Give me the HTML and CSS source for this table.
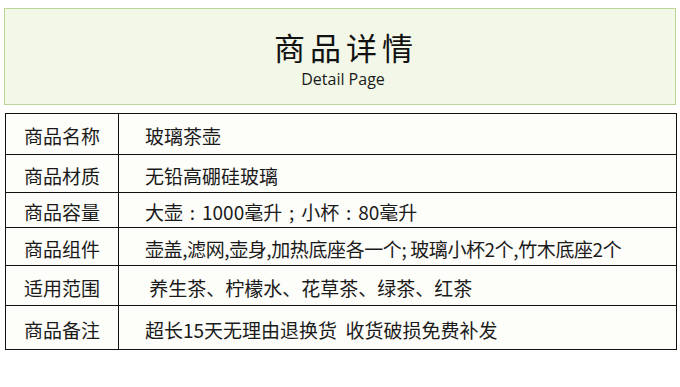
FILE: index.html
```html
<!DOCTYPE html>
<html lang="zh">
<head>
<meta charset="utf-8">
<link rel="stylesheet" href="styles.css">
</head>
<body>
<div class="page">
  <header class="banner">
    <h1 class="title">商品详情</h1>
    <p class="subtitle">Detail Page</p>
  </header>
  <table class="spec">
    <tr class="r1"><th>商品名称</th><td>玻璃茶壶</td></tr>
    <tr class="r2"><th>商品材质</th><td>无铅高硼硅玻璃</td></tr>
    <tr class="r3"><th>商品容量</th><td>大壶<span class="punct">:</span>1000毫升<span class="punct">;</span>小杯<span class="punct">:</span>80毫升</td></tr>
    <tr class="r4"><th>商品组件</th><td class="tight">壶盖,滤网,壶身,加热底座各一个; 玻璃小杯2个,竹木底座2个</td></tr>
    <tr class="r5"><th>适用范围</th><td>&nbsp;养生茶、柠檬水、花草茶、绿茶、红茶</td></tr>
    <tr class="r6"><th>商品备注</th><td>超长15天无理由退换货&nbsp;&nbsp;收货破损免费补发</td></tr>
  </table>
</div>
</body>
</html>
```
FILE: styles.css
```css
html, body {
  margin: 0;
  padding: 0;
  background: #ffffff;
}
.page {
  width: 680px;
  height: 387px;
  padding-top: 8px;
  box-sizing: border-box;
  font-family: "Noto Sans CJK SC", "Noto Sans", sans-serif;
  color: #1e1e1e;
}
.banner {
  margin: 0 4px;
  height: 97px;
  box-sizing: border-box;
  border: 1px solid #bcd598;
  background: #f2f7e7;
  display: flex;
  flex-direction: column;
  align-items: center;
  padding-top: 19px;
  padding-left: 12px;
}
.title {
  margin: 0;
  font-size: 31px;
  font-weight: 400;
  line-height: 38px;
  letter-spacing: 5px;
  color: #111;
}
.subtitle {
  margin: 2px 0 0;
  padding-right: 6px;
  font-family: "Open Sans", "Noto Sans", sans-serif;
  font-size: 16px;
  line-height: 22px;
  color: #1a1a1a;
}
.spec {
  margin: 8px 4px 0 5px;
  width: 672px;
  border-collapse: collapse;
  background: #fdfdf9;
  font-size: 19px;
}
.spec th, .spec td {
  border: 1px solid #111;
  padding: 0;
  font-weight: 400;
  line-height: 24px;
  vertical-align: middle;
  padding-top: 4px;
  color: #1a1a1a;
}
.spec th {
  width: 112px;
  text-align: center;
}
.spec td {
  text-align: left;
  padding-left: 26px;
}
.punct {
  display: inline-block;
  width: 1em;
  text-align: center;
}
.tight {
  letter-spacing: -0.4px;
}
.r1 { height: 41px; }
.r2 { height: 38px; }
.r3 { height: 35px; }
.r4 { height: 38px; }
.r5 { height: 40px; }
.r6 { height: 44px; }
```
